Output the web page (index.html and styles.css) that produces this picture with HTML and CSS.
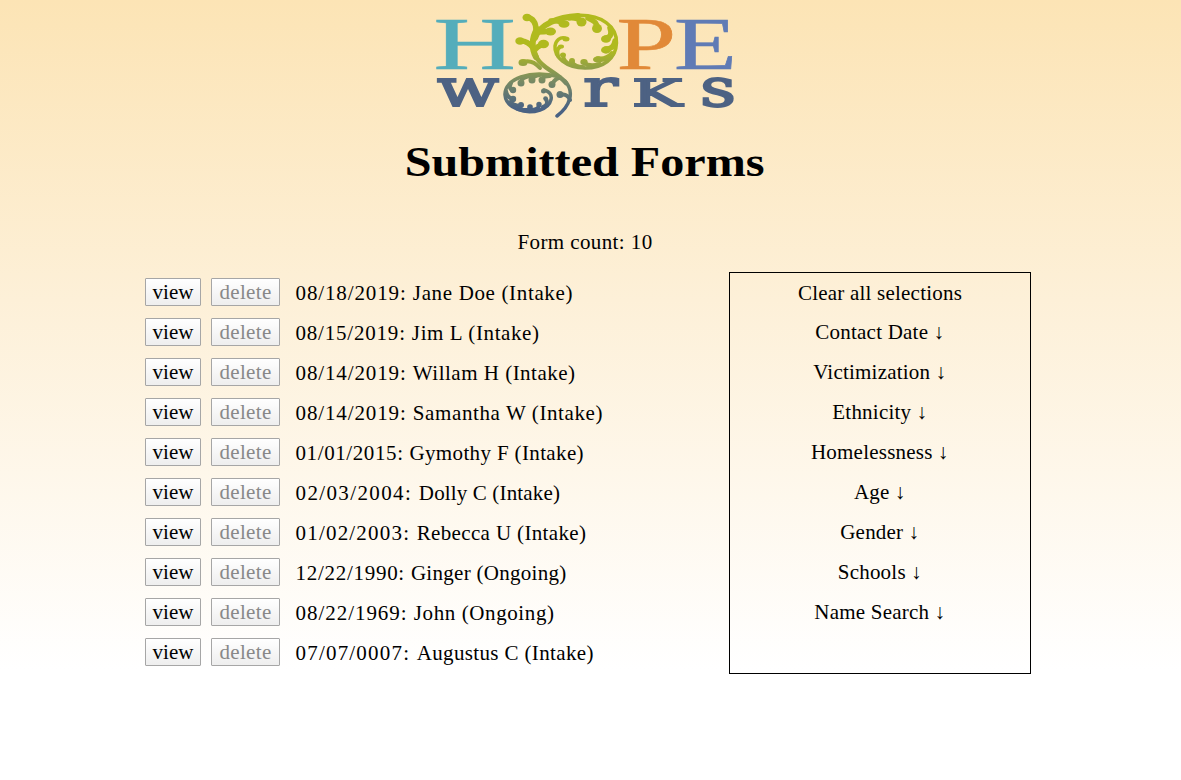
FILE: index.html
```html
<!DOCTYPE html>
<html lang="en"><head><meta charset="utf-8"><title>Submitted Forms</title>
<link rel="stylesheet" href="styles.css"></head>
<body>
<header class="header">
<svg class="logo" viewBox="430 8 310 114" role="img" aria-label="Hope Works">
<defs><linearGradient id="vine" gradientUnits="userSpaceOnUse" x1="0" y1="50" x2="0" y2="108"><stop offset="0" stop-color="#b0ba1e"/><stop offset=".5" stop-color="#7c8e60"/><stop offset="1" stop-color="#4a6283"/></linearGradient></defs>
<g class="logo-top">
<text transform="translate(433.500 69) scale(1.52 1)" fill="#54adbb" stroke="#54adbb">H</text>
<text transform="translate(616.500 69) scale(1.43 1)" fill="#e18938" stroke="#e18938">P</text>
<text transform="translate(674 69) scale(1.37 1)" fill="#607bb5" stroke="#607bb5">E</text>
</g>
<g class="logo-bottom">
<text x="437" y="105.500" textLength="62" lengthAdjust="spacingAndGlyphs">w</text>
<text x="583" y="105.500" textLength="35" lengthAdjust="spacingAndGlyphs">r</text>
<text class="logo-k" x="632" y="105.500" textLength="50" lengthAdjust="spacingAndGlyphs">K</text>
<text x="700" y="105.500" textLength="36" lengthAdjust="spacingAndGlyphs">s</text>
</g>
<g fill="none" stroke="url(#vine)" stroke-linecap="round" stroke-linejoin="round">
<path stroke-width="6" d="M537 29C532 37 531 48 536 57M535 38C540 24 558 17 578 16"/>
<path stroke-width="3.500" d="M576 15.500C602 14 617 27 616.500 43C616 59 603 68 585 68C566 68 554 57 555 46C556 40 560 37 565 38"/>
<path stroke-width="4.500" d="M535 53C538 67 557 72 566 83"/>
<path stroke-width="3.500" d="M565 81C575 92 570 106 557 116M560 77C530 69 504 79 505 95C506 108 525 115 540 110C552 106 556 93 544 90"/>
<path stroke-width="5.500" d="M527 17Q536 19 536 30M551 31Q544 32 537 32M521 41Q528 41 533 48M544 44Q537 46 534 51M565 24Q560 20 551 21M582 22Q577 17 569 18M597 28Q598 22 588 18M606 38Q613 37 610 28M606 49Q614 49 615 41M598 59Q607 60 612 54"/>
<path stroke-width="4" d="M523 62Q532 59 540 68M584 63Q590 67 600 64M572 62Q575 67 583 67M563 56Q564 62 570 64M560 47Q556 49 558 56"/>
<path stroke-width="4" d="M521 82Q521 78 530 76M532 80Q532 76 540 75M542 80Q542 76 550 76M552 84Q555 79 559 78M513 90Q508 89 511 83M513 99Q507 98 506 91M521 106Q514 106 510 102M530 109Q525 111 518 109M539 106Q538 110 531 110M546 99Q549 105 543 107M560 95Q567 93 570 100"/>
</g>
<g fill="url(#vine)">
<ellipse cx="527" cy="17.500" rx="4.500" ry="3.800"/><ellipse cx="520" cy="41" rx="4.700" ry="3.800"/><ellipse cx="550.500" cy="31.500" rx="5.500" ry="4"/><ellipse cx="543.500" cy="44" rx="5.500" ry="4.200"/><ellipse cx="523" cy="62.500" rx="4.500" ry="3.500"/>
<ellipse cx="564" cy="24" rx="5.500" ry="3.800"/><ellipse cx="581.500" cy="22" rx="5" ry="4.500"/><ellipse cx="597" cy="28.500" rx="5" ry="4.500"/><ellipse cx="606" cy="39" rx="5" ry="3.800"/><ellipse cx="606" cy="50" rx="5" ry="3.700"/><ellipse cx="598" cy="59.500" rx="5" ry="3.300"/><ellipse cx="584" cy="62" rx="3.700" ry="3"/><ellipse cx="572" cy="61" rx="3" ry="3"/><ellipse cx="563" cy="55" rx="3" ry="2.500"/><ellipse cx="561" cy="46.500" rx="3" ry="2"/><ellipse cx="566" cy="39" rx="3.500" ry="2.500"/>
<circle cx="521" cy="83" r="3.500"/><circle cx="532" cy="80" r="3.500"/><circle cx="542" cy="80" r="3.500"/><circle cx="552" cy="84.500" r="3.500"/><circle cx="513" cy="90" r="3.200"/><circle cx="513" cy="99" r="3.200"/><circle cx="521" cy="105" r="3"/><circle cx="530" cy="107" r="2.800"/><circle cx="539" cy="104.500" r="2.700"/><circle cx="545.500" cy="98.500" r="2.300"/><circle cx="543.500" cy="91" r="2.500"/><circle cx="560" cy="94.500" r="3.500"/>
</g>
</svg>
<h1 class="title"><span>Submitted Forms</span></h1>
</header>
<p class="count">Form count: 10</p>
<main class="content">
<ul class="forms">
<li class="form r1"><button>view</button><button disabled>delete</button><time>08/18/2019: </time><span>Jane Doe (Intake)</span></li>
<li class="form r2"><button>view</button><button disabled>delete</button><time>08/15/2019: </time><span>Jim L (Intake)</span></li>
<li class="form r3"><button>view</button><button disabled>delete</button><time>08/14/2019: </time><span>Willam H (Intake)</span></li>
<li class="form r4"><button>view</button><button disabled>delete</button><time>08/14/2019: </time><span>Samantha W (Intake)</span></li>
<li class="form r5"><button>view</button><button disabled>delete</button><time>01/01/2015: </time><span>Gymothy F (Intake)</span></li>
<li class="form r6"><button>view</button><button disabled>delete</button><time>02/03/2004: </time><span>Dolly C (Intake)</span></li>
<li class="form r7"><button>view</button><button disabled>delete</button><time>01/02/2003: </time><span>Rebecca U (Intake)</span></li>
<li class="form r8"><button>view</button><button disabled>delete</button><time>12/22/1990: </time><span>Ginger (Ongoing)</span></li>
<li class="form r9"><button>view</button><button disabled>delete</button><time>08/22/1969: </time><span>John (Ongoing)</span></li>
<li class="form r10"><button>view</button><button disabled>delete</button><time>07/07/0007: </time><span>Augustus C (Intake)</span></li>
</ul>
<aside class="filters">
<div>Clear all selections</div><div>Contact Date <i>↓</i></div><div>Victimization <i>↓</i></div><div>Ethnicity <i>↓</i></div><div>Homelessness <i>↓</i></div><div>Age <i>↓</i></div><div>Gender <i>↓</i></div><div>Schools <i>↓</i></div><div>Name Search <i>↓</i></div>
</aside>
</main>
</body></html>
```
FILE: styles.css
```css
*{box-sizing:border-box}
body{margin:0;height:780px;overflow:hidden;background:linear-gradient(#fce4b5 0,#fdf0d8 300px,#fff 670px);font-family:Georgia,"Liberation Serif",serif;font-size:21px;letter-spacing:.22px;color:#000}
.header{display:flex;flex-direction:column;align-items:center;padding:8px 11px 0 0}
.logo{width:310px;height:114px;display:block}
.logo-top{font-family:"Liberation Serif",serif;font-size:75px;letter-spacing:0;stroke-width:.6px}
.logo-bottom{font-family:"DejaVu Serif",serif;font-size:53px;letter-spacing:0;fill:#4d6283;stroke:#4d6283;stroke-width:1.9px}
.logo-k{font-size:38px}
.title{margin:15px 0 0;height:50px;line-height:50px;font-size:43px;letter-spacing:0;white-space:nowrap}
.title span{display:inline-block;transform:scaleX(1.12)}
.count{margin:43px 11px 0 0;height:24px;line-height:24px;text-align:center;letter-spacing:.4px}
.content{display:flex;justify-content:space-between;width:886px;margin:18px 0 0 145px}
.forms{list-style:none;margin:0;padding:0}
.form{display:flex;height:40px;align-items:flex-start;padding-top:6px;white-space:pre}
.form button{width:56px;height:28px;margin:0 10px 0 0;padding:0;border:1px solid #a6a6a6;border-radius:1px;background:linear-gradient(#fff,#eee);font:inherit;letter-spacing:.1px;line-height:26px;color:#000}
.form button:disabled{width:69px;margin-right:15.5px;color:#888;letter-spacing:.35px}
.form span,.form time{line-height:30px}
.r1 time,.r3 time,.r4 time{letter-spacing:.88px}
.r2 time{letter-spacing:.8px}
.r5 time{letter-spacing:.6px}
.r6 time{letter-spacing:1.38px}
.r7 time,.r10 time{letter-spacing:1.2px}
.r8 time{letter-spacing:.72px}
.r9 time{letter-spacing:.96px}
.r1 span{letter-spacing:.65px}
.r2 span,.r4 span,.r9 span{letter-spacing:.6px}
.r3 span{letter-spacing:.5px}
.r5 span,.r7 span,.r10 span{letter-spacing:.36px}
.r6 span{letter-spacing:.15px}
.r8 span{letter-spacing:.29px}
.filters{width:302px;height:402px;border:1px solid #000;text-align:center}
.filters div{height:40px;line-height:39px}
.filters div:first-child{line-height:40px}
.filters i{font-style:normal;display:inline-block;width:11px;letter-spacing:0;text-indent:-1px}
```
